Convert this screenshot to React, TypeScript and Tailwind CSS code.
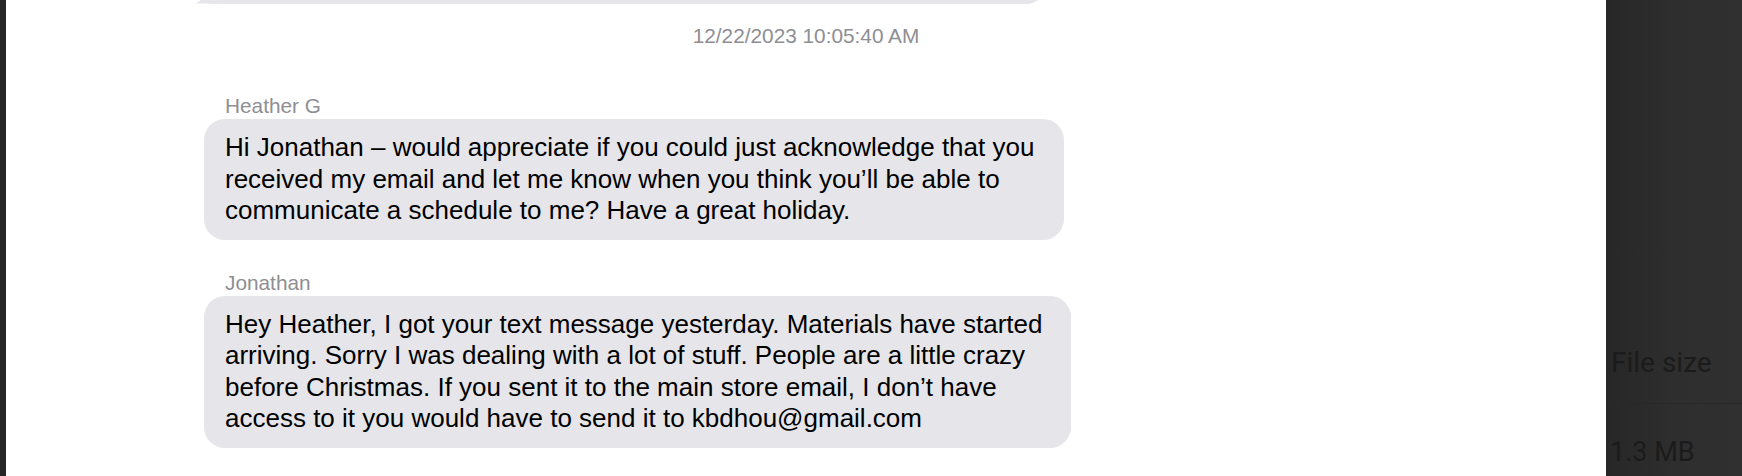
import React from 'react';

type Message = {
    id: number;
    sender: string;
    text: string;
    width: string;
};

const messages: Message[] = [
    {
        id: 1,
        sender: 'Heather G',
        text: 'Hi Jonathan – would appreciate if you could just acknowledge that you received my email and let me know when you think you’ll be able to communicate a schedule to me? Have a great holiday.',
        width: 'max-w-[860px]',
    },
    {
        id: 2,
        sender: 'Jonathan',
        text: 'Hey Heather, I got your text message yesterday. Materials have started arriving. Sorry I was dealing with a lot of stuff. People are a little crazy before Christmas. If you sent it to the main store email, I don’t have access to it you would have to send it to kbdhou@gmail.com',
        width: 'max-w-[867px]',
    },
];

const Bubble: React.FC<{ msg: Message; first: boolean }> = ({ msg, first }) => (
    <div className={`flex flex-col items-start pl-[198px] ${first ? 'mt-[45px]' : 'mt-[30px]'}`}>
        <span className="pl-[21px] text-[20.8px] leading-[25px] text-[#8e8e93] mb-[1px]">{msg.sender}</span>
        <div className={`${msg.width} rounded-[21px] bg-[#e5e5ea] px-[21px] py-[13px] text-[26px] leading-[31.5px] text-black`}>
            {msg.text}
        </div>
    </div>
);

export default function App() {
    return (
        <div className="flex h-[476px] w-[1742px] overflow-hidden bg-white font-['Liberation_Sans',Arial,sans-serif]">
            {/* left edge of the window behind */}
            <div className="w-[6px] shrink-0 bg-[#262626]" />

            {/* Conversation */}
            <main className="flex w-[1600px] shrink-0 flex-col overflow-hidden bg-white">
                {/* previous bubble, scrolled mostly out of view */}
                <div className="pl-[198px]">
                    <div className="relative -mt-[36px] h-[40px] w-[842px] rounded-[20px] bg-[#e5e5ea]">
                        <svg className="absolute bottom-0 -left-[9px]" width="24" height="14" viewBox="0 0 24 14">
                            <path d="M24 0 L24 14 C16 14 6 13 0 14 C6 11 10 6 10 0 Z" fill="#e5e5ea" />
                        </svg>
                    </div>
                </div>

                <div className="mt-[19px] text-center text-[20.8px] leading-[25px] text-[#8e8e93]">
                    12/22/2023 10:05:40 AM
                </div>

                {messages.map((m, i) => (
                    <Bubble key={m.id} msg={m} first={i === 0} />
                ))}
            </main>

            {/* Dimmed side panel */}
            <aside className="flex flex-1 flex-col bg-gradient-to-r from-[#272727] via-[#2e2e2e] to-[#303030] font-['Roboto',sans-serif]">
                <div className="mt-[347px] border-b border-[#282828] pb-[24px] pl-[5px] text-[28px] leading-[32px] text-[#1b1b1b]">
                    File size
                </div>
                <div className="pt-[32px] pl-[4px] text-[27px] leading-[32px] text-[#1b1b1b]">1.3 MB</div>
            </aside>
        </div>
    );
}
